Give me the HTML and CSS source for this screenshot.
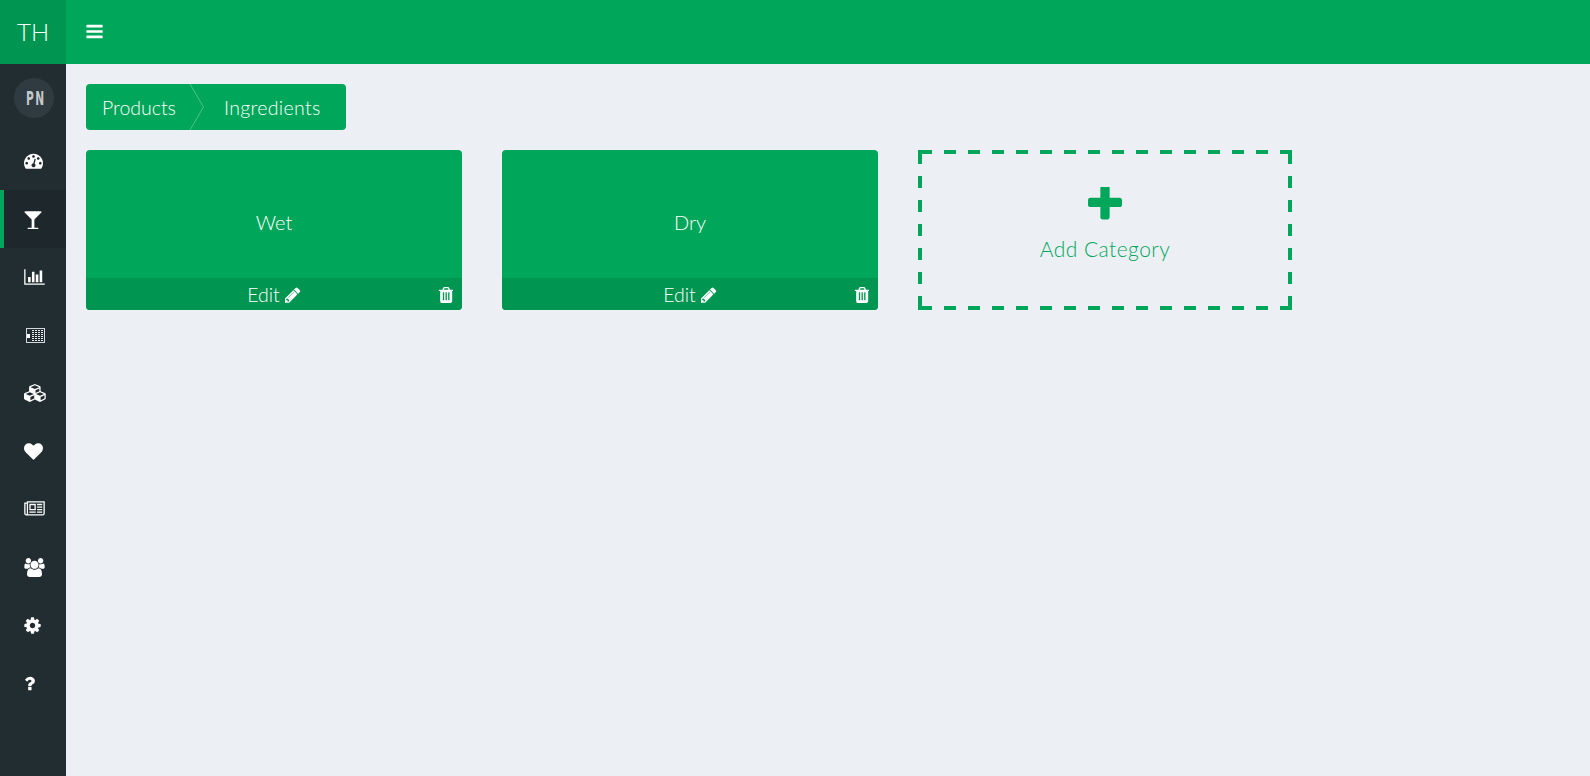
FILE: index.html
```html
<!DOCTYPE html>
<html lang="en">

<head>
    <meta charset="UTF-8">
    <meta name="viewport" content="width=device-width, initial-scale=1.0">
    <title>Products</title>
    <link rel="stylesheet" href="styles.css">
</head>

<body>
    <svg class="icon-defs" width="0" height="0">
        <defs>
            <symbol id="i-pencil" viewBox="128 128 1595 1536"><path d="M491 1536l91-91-235-235-91 91v107h128v128h107zm523-928q0-22-22-22-10 0-17 7l-542 542q-7 7-7 17 0 22 22 22 10 0 17-7l542-542q7-7 7-17zm-54-192l416 416-832 832h-416v-416zm683 96q0 53-37 90l-166 166-416-416 166-165q36-38 90-38 53 0 91 38l235 234q37 39 37 91z"/></symbol>
            <symbol id="i-trash" viewBox="128 128 1408 1536"><path d="M704 1376v-704q0-14-9-23t-23-9h-64q-14 0-23 9t-9 23v704q0 14 9 23t23 9h64q14 0 23-9t9-23zm256 0v-704q0-14-9-23t-23-9h-64q-14 0-23 9t-9 23v704q0 14 9 23t23 9h64q14 0 23-9t9-23zm256 0v-704q0-14-9-23t-23-9h-64q-14 0-23 9t-9 23v704q0 14 9 23t23 9h64q14 0 23-9t9-23zm-544-992h448l-48-117q-7-9-17-11h-317q-10 2-17 11zm928 32v64q0 14-9 23t-23 9h-96v948q0 83-47 143.500t-113 60.500h-832q-66 0-113-58.500t-47-141.500v-952h-96q-14 0-23-9t-9-23v-64q0-14 9-23t23-9h309l70-167q15-37 54-63t79-26h320q40 0 79 26t54 63l70 167h309q14 0 23 9t9 23z"/></symbol>
        </defs>
    </svg>

    <div class="logo">TH</div>
    <header class="topbar">
        <svg class="menu-icon" width="19" height="19" viewBox="0 0 1792 1792"><path d="M1664 1344v128q0 26-19 45t-45 19h-1408q-26 0-45-19t-19-45v-128q0-26 19-45t45-19h1408q26 0 45 19t19 45zm0-512v128q0 26-19 45t-45 19h-1408q-26 0-45-19t-19-45v-128q0-26 19-45t45-19h1408q26 0 45 19t19 45zm0-512v128q0 26-19 45t-45 19h-1408q-26 0-45-19t-19-45v-128q0-26 19-45t45-19h1408q26 0 45 19t19 45z"/></svg>
    </header>

    <nav class="sidebar">
        <div class="avatar-row"><div class="avatar"><span class="avatar-text">PN</span></div></div>
        <a class="nav-item">
            <svg class="icon-up" width="19" height="19" viewBox="0 0 1792 1792"><path d="M384 1152q0-53-37.500-90.500t-90.500-37.500-90.500 37.500-37.500 90.500 37.500 90.500 90.500 37.500 90.500-37.500 37.500-90.500zm192-448q0-53-37.500-90.500t-90.500-37.500-90.500 37.500-37.500 90.500 37.500 90.500 90.500 37.500 90.500-37.500 37.500-90.500zm428 481l101-382q6-26-7.500-48.500t-38.500-29.500-48 6.500-30 39.500l-101 382q-60 5-107 43.500t-63 98.500q-20 77 20 146t117 89 146-20 89-117q16-60-6-117t-72-91zm660-33q0-53-37.500-90.500t-90.500-37.500-90.500 37.500-37.500 90.500 37.500 90.500 90.500 37.500 90.500-37.500 37.500-90.500zm-640-640q0-53-37.500-90.500t-90.500-37.500-90.500 37.500-37.500 90.500 37.500 90.500 90.500 37.500 90.500-37.500 37.500-90.500zm448 192q0-53-37.500-90.500t-90.500-37.500-90.500 37.500-37.500 90.500 37.500 90.500 90.500 37.500 90.500-37.500 37.500-90.500zm320 448q0 261-141 483-19 29-54 29h-1402q-35 0-54-29-141-221-141-483 0-182 71-348t191-286 286-191 348-71 348 71 286 191 191 286 71 348z"/></svg>
        </a>
        <a class="nav-item active">
            <svg width="18" height="19" viewBox="93 0 1606 1792"><path d="M1699 186q0 35-43 78l-632 632v768h320q26 0 45 19t19 45-19 45-45 19h-896q-26 0-45-19t-19-45 19-45 45-19h320v-768l-632-632q-43-43-43-78 0-23 18-36.500t38-17.500 43-4h1408q23 0 43 4t38 17.500 18 36.500z"/></svg>
        </a>
        <a class="nav-item">
            <svg width="21" height="18" viewBox="0 0 2048 1792"><path d="M640 896v512h-256v-512h256zm384-512v1024h-256v-1024h256zm1024 1152v128h-2048v-1536h128v1408h1920zm-640-896v768h-256v-768h256zm384-384v1152h-256v-1152h256z"/></svg>
        </a>
        <a class="nav-item">
            <svg class="sheet-icon" width="19" height="15" viewBox="0 0 19 15">
                <rect class="sheet-frame" x="0.5" y="0.5" width="18" height="14"/>
                <rect x="1" y="6" width="3" height="4"/>
                <path class="sheet-grid" d="M6 2.500H17M6 4.500H17M6 6.500H17M6 8.500H17M6 10.500H17M6 12.500H17"/>
            </svg>
        </a>
        <a class="nav-item">
            <svg width="23" height="18" viewBox="0 0 2304 1792"><path d="M640 1632l384-192v-314l-384 164v342zm-64-454l404-173-404-173-404 173zm1088 454l384-192v-314l-384 164v342zm-64-454l404-173-404-173-404 173zm-448-293l384-165v-266l-384 164v267zm-64-379l441-189-441-189-441 189zm1088 518v416q0 36-19 67t-52 47l-448 224q-25 14-57 14t-57-14l-448-224q-4-2-7-4-2 2-7 4l-448 224q-25 14-57 14t-57-14l-448-224q-33-16-52-47t-19-67v-416q0-38 21.500-70t56.500-48l434-186v-400q0-38 21.500-70t56.500-48l448-192q23-10 50-10t50 10l448 192q35 16 56.500 48t21.500 70v400l434 186q36 16 57 48t21 70z"/></svg>
        </a>
        <a class="nav-item">
            <svg width="19" height="19" viewBox="0 0 1792 1792"><path d="M896 1664q-26 0-44-18l-624-602q-10-8-27.500-26t-55.500-65.500-68-97.500-53.500-121-23.500-138q0-220 127-344t351-124q62 0 126.500 21.500t120 58 95.500 68.500 76 68q36-36 76-68t95.500-68.500 120-58 126.500-21.500q224 0 351 124t127 344q0 221-229 450l-623 600q-18 18-44 18z"/></svg>
        </a>
        <a class="nav-item">
            <svg width="21" height="18" viewBox="0 0 2048 1792"><path d="M1024 512h-384v384h384v-384zm128 640v128h-640v-128h640zm0-768v640h-640v-640h640zm640 768v128h-512v-128h512zm0-256v128h-512v-128h512zm0-256v128h-512v-128h512zm0-256v128h-512v-128h512zm-1536 960v-960h-128v960q0 26 19 45t45 19 45-19 19-45zm1664 0v-1088h-1536v1088q0 33-11 64h1483q26 0 45-19t19-45zm128-1216v1216q0 80-56 136t-136 56h-1664q-80 0-136-56t-56-136v-1088h256v-128h1792z"/></svg>
        </a>
        <a class="nav-item">
            <svg width="21" height="19" viewBox="0 0 1920 1792"><path d="M593 896q-162 5-265 128h-134q-82 0-138-40.500t-56-118.500q0-353 124-353 6 0 43.500 21t97.500 42.500 119 21.500q67 0 133-23-5 37-5 66 0 139 81 256zm1071 637q0 120-73 189.500t-194 69.500h-874q-121 0-194-69.500t-73-189.500q0-53 3.500-103.500t14-109 26.500-108.500 43-97.500 62-81 85.500-53.500 111.500-20q10 0 43 21.500t73 48 107 48 135 21.500 135-21.500 107-48 73-48 43-21.500q61 0 111.500 20t85.500 53.500 62 81 43 97.500 26.500 108.500 14 109 3.500 103.500zm-1024-1277q0 106-75 181t-181 75-181-75-75-181 75-181 181-75 181 75 75 181zm704 384q0 159-112.500 271.500t-271.500 112.500-271.500-112.500-112.500-271.500 112.500-271.500 271.500-112.500 271.500 112.500 112.500 271.500zm576 225q0 78-56 118.500t-138 40.500h-134q-103-123-265-128 81-117 81-256 0-29-5-66 66 23 133 23 59 0 119-21.500t97.500-42.500 43.500-21q124 0 124 353zm-128-609q0 106-75 181t-181 75-181-75-75-181 75-181 181-75 181 75 75 181z"/></svg>
        </a>
        <a class="nav-item">
            <svg width="17" height="19" viewBox="128 0 1536 1792"><path d="M1152 896q0-106-75-181t-181-75-181 75-75 181 75 181 181 75 181-75 75-181zm512-109v222q0 12-8 23t-20 13l-185 28q-19 54-39 91 35 50 107 138 10 12 10 25t-9 23q-27 37-99 108t-94 71q-12 0-26-9l-138-108q-44 23-91 38-16 136-29 186-7 28-36 28h-222q-14 0-24.500-8.500t-11.500-21.500l-28-184q-49-16-90-37l-141 107q-10 9-25 9-14 0-25-11-126-114-165-168-7-10-7-23 0-12 8-23 15-21 51-66.500t54-70.500q-27-50-41-99l-183-27q-13-2-21-12.500t-8-23.500v-222q0-12 8-23t19-13l186-28q14-46 39-92-40-57-107-138-10-12-10-24 0-10 9-23 26-36 98.500-107.500t94.500-71.500q13 0 26 10l138 107q44-23 91-38 16-136 29-186 7-28 36-28h222q14 0 24.500 8.500t11.500 21.500l28 184q49 16 90 37l142-107q9-9 24-9 13 0 25 10 129 119 165 170 7 8 7 22 0 12-8 23-15 21-51 66.500t-54 70.500q26 50 41 98l183 28q13 2 21 12.500t8 23.500z"/></svg>
        </a>
        <a class="nav-item">
            <svg width="11" height="19" viewBox="388 0 1016 1792"><path d="M1088 1256v240q0 16-12 28t-28 12h-240q-16 0-28-12t-12-28v-240q0-16 12-28t28-12h240q16 0 28 12t12 28zm316-600q0 54-15.500 101t-35 76.500-55 59.500-57.500 43.500-61 35.500q-41 23-68.500 65t-27.500 67q0 17-12 32.500t-28 15.500h-240q-15 0-25.500-18.500t-10.500-37.500v-45q0-83 65-156.500t143-108.500q59-27 84-56t25-76q0-42-46.500-74t-107.500-32q-65 0-108 29-35 25-107 115-13 16-31 16-12 0-25-8l-164-125q-13-10-15.500-25t5.500-28q160-266 464-266 80 0 161 31t146 83 106 127.500 41 158.500z"/></svg>
        </a>
    </nav>

    <main class="content">
        <div class="crumbs">
            <span class="crumb">Products</span>
            <svg class="crumb-sep" width="16" height="46" viewBox="0 0 16 46"><path d="M2 0L15.500 23L2 46"/></svg>
            <span class="crumb crumb-last">Ingredients</span>
        </div>

        <div class="categories">
            <div class="card">
                <div class="card-name">Wet</div>
                <div class="card-foot">
                    <span></span>
                    <span class="card-edit">Edit <svg width="16" height="16" class="foot-icon"><use href="#i-pencil"/></svg></span>
                    <svg width="15" height="16" class="foot-icon card-trash"><use href="#i-trash"/></svg>
                </div>
            </div>
            <div class="card">
                <div class="card-name">Dry</div>
                <div class="card-foot">
                    <span></span>
                    <span class="card-edit">Edit <svg width="16" height="16" class="foot-icon"><use href="#i-pencil"/></svg></span>
                    <svg width="15" height="16" class="foot-icon card-trash"><use href="#i-trash"/></svg>
                </div>
            </div>
            <div class="add-card">
                <svg class="add-border" width="374" height="160" viewBox="0 0 374 160">
                    <path d="M2 14V2H14M362 2H372V14M372 146V158H362M14 158H2V146"/>
                    <path class="dashes" d="M26 2H350M26 158H350M2 26V134M372 26V134"/>
                </svg>
                <svg class="add-plus" width="34" height="34" viewBox="192 192 1408 1408"><path d="M1600 736v192q0 40-28 68t-68 28h-416v416q0 40-28 68t-68 28h-192q-40 0-68-28t-28-68v-416h-416q-40 0-68-28t-28-68v-192q0-40 28-68t68-28h416v-416q0-40 28-68t68-28h192q40 0 68 28t28 68v416h416q40 0 68 28t28 68z"/></svg>
                <div class="add-label">Add Category</div>
            </div>
        </div>
    </main>
</body>

</html>
```

FILE: styles.css
```css
html,
body {
    height: 100%;
}

body {
    display: grid;
    grid-template-columns: 66px 1fr;
    grid-template-rows: 64px 1fr;
    margin: 0;
    background-color: #ecf0f5;
    font-family: "Lato", "Open Sans", sans-serif;
    font-weight: 300;
    color: #fff;
    overflow: hidden;
}

.icon-defs {
    position: absolute;
}

.logo {
    display: flex;
    align-items: center;
    justify-content: center;
    padding-bottom: 2px;
    box-sizing: border-box;
    background-color: #009551;
    font-size: 24px;
}

.topbar {
    display: flex;
    align-items: center;
    padding: 0 0 2px 19px;
    box-sizing: border-box;
    background-color: #00a65a;
}

.menu-icon {
    fill: #fff;
}

.sidebar {
    background-color: #222d32;
}

.avatar-row {
    height: 68px;
    padding: 14px 0 0 14px;
    box-sizing: border-box;
}

.avatar {
    display: flex;
    align-items: center;
    justify-content: center;
    width: 40px;
    height: 40px;
    border-radius: 50%;
    background-color: #2f3b41;
    color: #c3c8ca;
}

.avatar-text {
    font-family: "DejaVu Sans", sans-serif;
    font-size: 19px;
    font-weight: 700;
    letter-spacing: 3px;
    margin-right: -3px;
    transform: scaleX(0.56);
}

.nav-item {
    display: flex;
    align-items: center;
    height: 58px;
    padding-left: 24px;
    box-sizing: border-box;
}

.nav-item svg {
    fill: #fff;
}

.nav-item .icon-up {
    margin-top: -2px;
}

.nav-item.active {
    padding-left: 20px;
    border-left: 4px solid #00a65a;
    background-color: #1e282c;
}

.nav-item .sheet-icon {
    margin-left: 2px;
}

.sheet-icon .sheet-frame {
    fill: none;
    stroke: #d5d8da;
    stroke-width: 1;
}

.sheet-icon .sheet-grid {
    fill: none;
    stroke: #e8eaeb;
    stroke-width: 1;
    stroke-dasharray: 2 1;
}

.content {
    padding: 20px;
    min-width: 0;
}

.crumbs {
    display: inline-flex;
    align-items: center;
    height: 46px;
    padding: 0 25px 0 16px;
    border-radius: 4px;
    background-color: #00a65a;
    font-size: 19.5px;
    vertical-align: top;
}

.crumb-last {
    letter-spacing: 0.35px;
}

.crumb-sep {
    margin: 0 20px 0 12px;
    fill: none;
    stroke: rgba(255, 255, 255, 0.3);
    stroke-width: 1;
}

.categories {
    display: grid;
    grid-template-columns: 376px 376px 374px;
    column-gap: 40px;
    margin-top: 20px;
}

.card {
    display: flex;
    flex-direction: column;
    height: 160px;
    border-radius: 4px;
    overflow: hidden;
    background-color: #00a65a;
}

.card-name {
    flex: 1;
    padding-top: 60px;
    box-sizing: border-box;
    font-size: 20px;
    line-height: 24px;
    text-align: center;
}

.card-foot {
    display: grid;
    grid-template-columns: 1fr auto 1fr;
    align-items: center;
    height: 32px;
    padding: 0 9px;
    background-color: #009551;
    font-size: 19.5px;
}

.card-edit {
    display: flex;
    align-items: center;
    gap: 5px;
}

.foot-icon {
    margin-top: 2px;
    fill: #fff;
}

.card-trash {
    justify-self: end;
}

.add-card {
    position: relative;
    height: 160px;
    padding-top: 37px;
    box-sizing: border-box;
    text-align: center;
    color: #00a65a;
}

.add-border {
    position: absolute;
    top: 0;
    left: 0;
    fill: none;
    stroke: #00a65a;
    stroke-width: 4;
}

.add-border .dashes {
    stroke-dasharray: 12 12;
}

.add-plus {
    display: block;
    margin: 0 auto;
    fill: #00a65a;
}

.add-label {
    margin-top: 16px;
    font-size: 21px;
    letter-spacing: 0.45px;
    line-height: 24px;
}
```
